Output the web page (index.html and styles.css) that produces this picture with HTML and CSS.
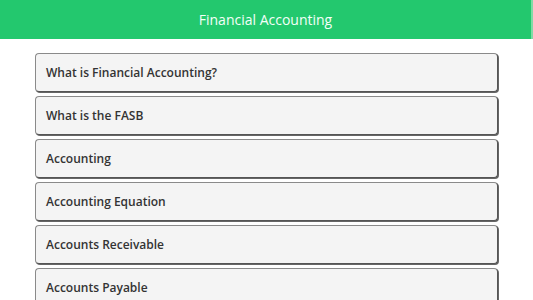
FILE: index.html
```html
<!DOCTYPE html>
<html>
<head>
<meta charset="utf-8">
<link rel="stylesheet" href="styles.css">
</head>
<body>
<header class="topbar">Financial Accounting</header>
<main class="list">
  <div class="card">What is Financial Accounting?</div>
  <div class="card">What is the FASB</div>
  <div class="card">Accounting</div>
  <div class="card">Accounting Equation</div>
  <div class="card">Accounts Receivable</div>
  <div class="card">Accounts Payable</div>
</main>
</body>
</html>
```
FILE: styles.css
```css
html, body {
  margin: 0;
  padding: 0;
  background: #ffffff;
  overflow: hidden;
}
body {
  font-family: "Open Sans", "Noto Sans", sans-serif;
}
.topbar {
  height: 39px;
  background: #23c86e;
  color: #f4fff8;
  font-size: 14px;
  display: flex;
  align-items: center;
  justify-content: center;
  border-right: 2px solid #7ddca5;
  box-sizing: border-box;
}
.list {
  display: flex;
  flex-direction: column;
  gap: 4px;
  padding: 14px 35px 0;
}
.card {
  box-sizing: border-box;
  height: 39px;
  border: 1px solid #8a8a8a;
  border-right-color: #555;
  border-bottom-color: #555;
  box-shadow: 1px 1px 0 #666;
  border-radius: 4px;
  background: #f4f4f4;
  color: #333;
  font-weight: 600;
  font-size: 12px;
  display: flex;
  align-items: center;
  padding-left: 10px;
}
```
